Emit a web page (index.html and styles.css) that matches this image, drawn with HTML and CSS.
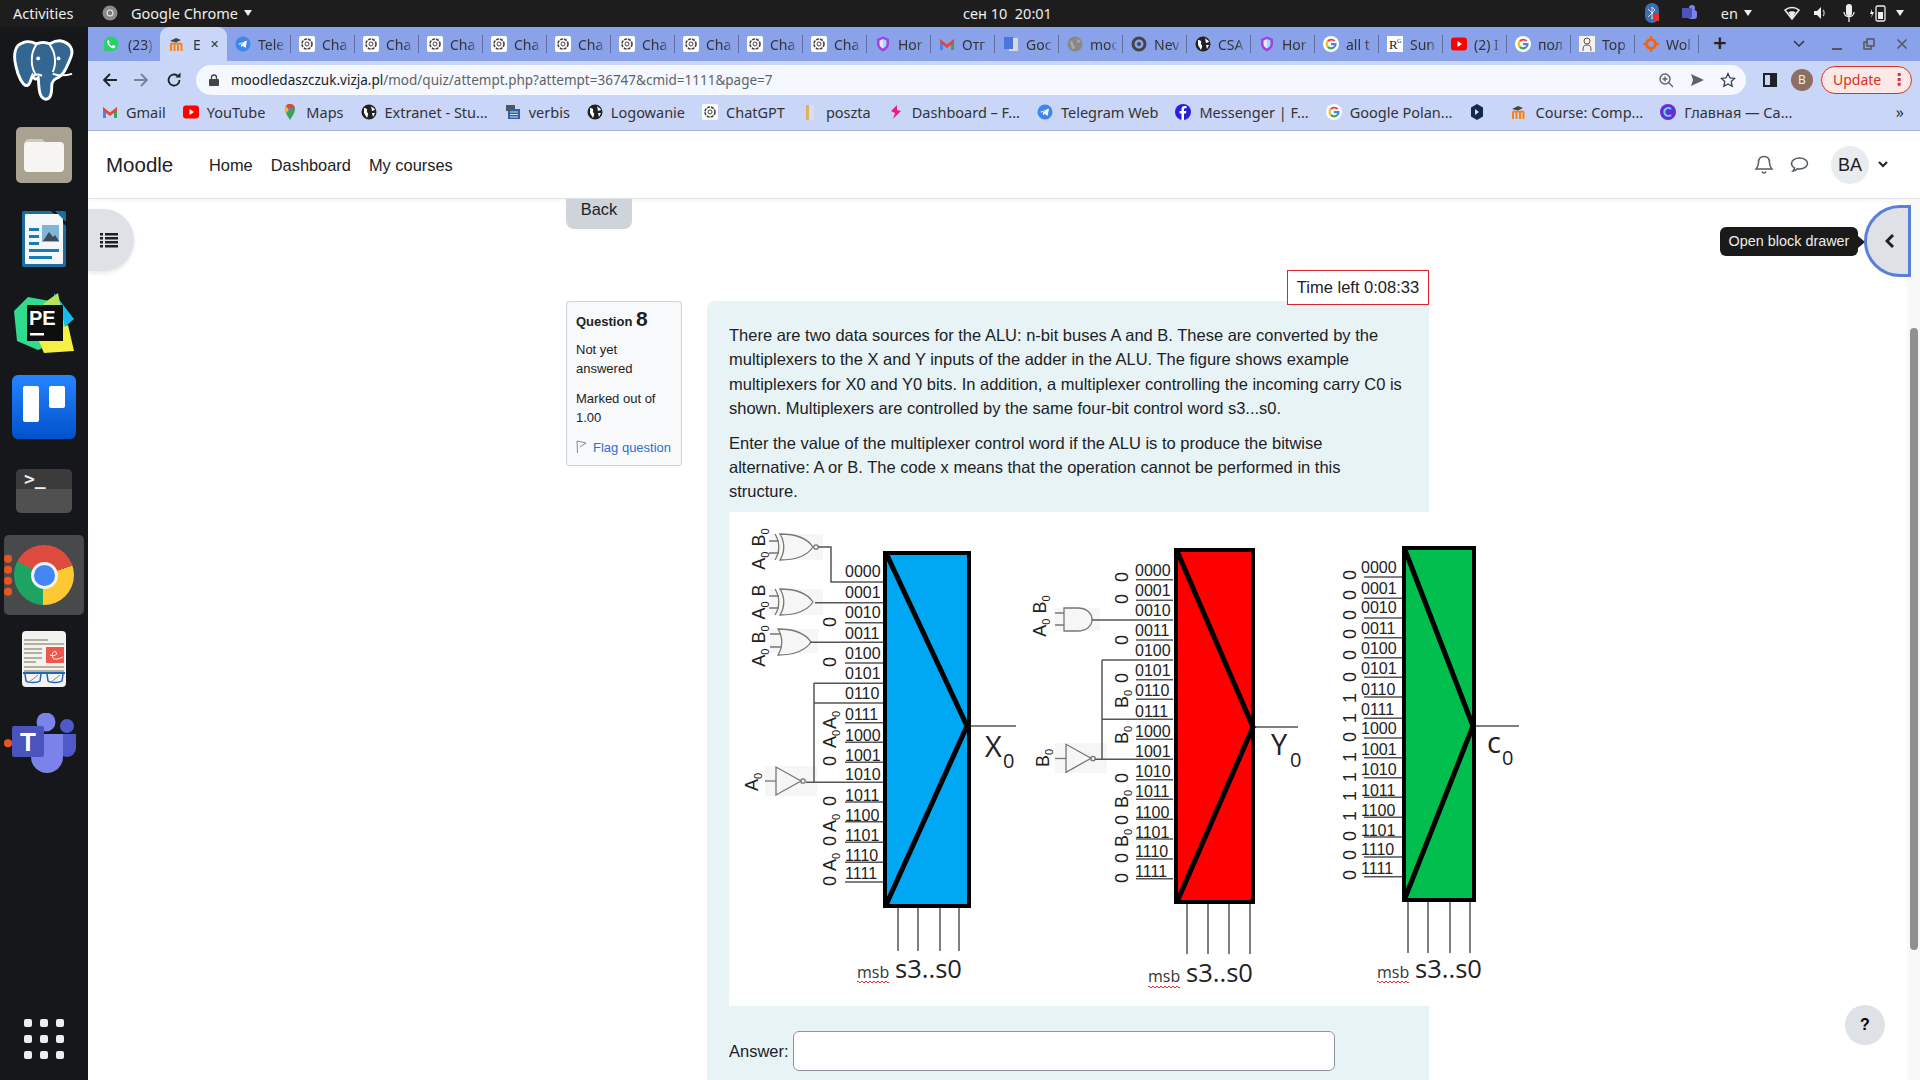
FILE: index.html
```html
<!DOCTYPE html>
<html lang="en">
<head>
    <meta charset="UTF-8">
    <title>Moodle quiz attempt</title>
    <link rel="stylesheet" href="styles.css">
</head>
<body>
    <svg class="sprite" width="0" height="0">
        <symbol id="i-wa" viewBox="0 0 16 16"><path d="M8 .5a7.4 7.4 0 0 0-6.4 11.1L.6 15.5l4-1A7.4 7.4 0 1 0 8 .5z" fill="#25d366"/><path d="M5.2 3.9c-.6.3-1.3 1.2-1 2.6.5 2.4 3.200 5.300 5.700 5.700 1.300.2 2.200-.5 2.400-1.200.1-.5.100-.9 0-1l-2-1c-.2 0-.4 0-.5.2l-.7.800c-.1.200-.3.200-.5.100-1.100-.5-2-1.300-2.600-2.500-.1-.2 0-.3.100-.4l.5-.7c.1-.1.100-.3 0-.5l-.8-1.900c-.2-.3-.4-.3-.6-.2z" fill="#fff"/></symbol>
        <symbol id="i-moodle" viewBox="0 0 16 16"><path d="M2 15V8.500c0-1.500 3.500-1.500 3.500 0V15M5.500 15V8.500c0-1.500 3.500-1.500 3.500 0V15M9 15V8.500c0-1.500 3.500-1.500 3.500 0V15" fill="none" stroke="#f98012" stroke-width="2"/><path d="M1 5l6-3 5 2-5 2.500z" fill="#444"/></symbol>
        <symbol id="i-tg" viewBox="0 0 16 16"><circle cx="8" cy="8" r="7.500" fill="#3f86ea"/><path d="M3 8l9-3.600-1.400 7.600-3-2.200-1.500 1.400-.3-2.400 4.200-3.400-5.400 3z" fill="#fff"/></symbol>
        <symbol id="i-gpt" viewBox="0 0 16 16"><rect width="16" height="16" rx="2" fill="#fff"/><circle cx="8" cy="8" r="5" fill="none" stroke="#444" stroke-width="1.600" stroke-dasharray="3 1"/><circle cx="8" cy="8" r="2" fill="none" stroke="#444"/></symbol>
        <symbol id="i-shield" viewBox="0 0 16 16"><path d="M8 .5l6 2.500v5c0 3.500-3 6-6 7.500-3-1.500-6-4-6-7.500V3z" fill="#a53fe0"/><path d="M8 3l3.500 1.500v3.500c0 2-1.500 3.500-3.500 4.500z" fill="#8fe8f0"/><path d="M8 3L4.500 4.500v3.500c0 2 1.500 3.500 3.500 4.500z" fill="#e8e2fb"/></symbol>
        <symbol id="i-gmail" viewBox="0 0 16 16"><path d="M1 3v11h3V7z" fill="#4285f4"/><path d="M15 3v11h-3V7z" fill="#34a853"/><path d="M1 3l7 5.500L15 3v3.500L8 12 1 6.500z" fill="#ea4335"/></symbol>
        <symbol id="i-translate" viewBox="0 0 16 16"><rect x="6" y="2" width="9" height="13" fill="#d8d8d8"/><path d="M1 1h9v12H1z" fill="#4a76dc"/></symbol>
        <symbol id="i-globegray" viewBox="0 0 16 16"><circle cx="8" cy="8" r="7.500" fill="#888"/><path d="M3 5c2 0 3 1 3 3s2 1 2 4l-3 1zM9 2c1 2 4 2 5 4l-3 1z" fill="#aaa"/></symbol>
        <symbol id="i-ring" viewBox="0 0 16 16"><circle cx="8" cy="8" r="6" fill="none" stroke="#444" stroke-width="3"/><circle cx="8" cy="8" r="2" fill="#444"/></symbol>
        <symbol id="i-globe" viewBox="0 0 16 16"><circle cx="8" cy="8" r="7.500" fill="#202124"/><path d="M3 4c2 0 4 1 3 3-1 1 2 2 1 4l-1 3-3-5zM10 2c1 2 3 1 4 4l-3 1zM11 9l3 0-2 4z" fill="#fff"/></symbol>
        <symbol id="i-google" viewBox="0 0 16 16"><circle cx="8" cy="8" r="8" fill="#fff"/><path d="M12.500 4.800A5.500 5.500 0 0 0 4 4.500l1.700 1.300a3.200 3.200 0 0 1 5-.4z" fill="#ea4335"/><path d="M4 4.500a5.500 5.500 0 0 0 0 7l1.700-1.300a3.200 3.200 0 0 1 0-4.400z" fill="#fbbc05"/><path d="M4 11.500a5.500 5.500 0 0 0 8.500-.2l-1.800-1.200a3.200 3.200 0 0 1-5 .1z" fill="#34a853"/><path d="M13.500 7H8v2.200h3.200a3 3 0 0 1-.5.900l1.800 1.200c1-1.200 1.200-2.800 1-4.300z" fill="#4285f4"/></symbol>
        <symbol id="i-yt" viewBox="0 0 16 16"><rect y="1.500" width="16" height="13" rx="3" fill="#f00"/><path d="M6.500 5v6L11 8z" fill="#fff"/></symbol>
        <symbol id="i-person" viewBox="0 0 16 16"><rect width="16" height="16" fill="#f4f1ea"/><circle cx="8" cy="5" r="3" fill="none" stroke="#555"/><path d="M4 15c0-5 1-6 4-6s4 1 4 6" fill="none" stroke="#555"/></symbol>
        <symbol id="i-gear" viewBox="0 0 16 16"><circle cx="8" cy="8" r="4.500" fill="none" stroke="#f4640c" stroke-width="3"/><path d="M7 0h2v3H7zM7 13h2v3H7zM0 7h3v2H0zM13 7h3v2h-3z" fill="#f4640c"/></symbol>
        <symbol id="i-maps" viewBox="0 0 16 16"><path d="M8 0C5 0 3 2.200 3 5c0 4 5 11 5 11s5-7 5-11c0-2.800-2-5-5-5z" fill="#34a853"/><path d="M4 2l4 3-4 4c-1-2-1.500-5 0-7z" fill="#fbbc05"/><path d="M8 0c2 0 4 1 4.500 3L8 7 4 2c1-1.400 2.500-2 4-2z" fill="#ea4335"/><circle cx="8" cy="5" r="1.800" fill="#4285f4"/></symbol>
        <symbol id="i-verbis" viewBox="0 0 16 16"><rect x="1" y="1" width="9" height="6" fill="#555"/><rect x="3" y="5" width="12" height="10" fill="#2f5fa8"/><path d="M5 8h8M5 10.500h8M5 13h8" stroke="#cfe0ff"/></symbol>
        <symbol id="i-poszta" viewBox="0 0 16 16"><rect x="4" y="1" width="3" height="15" fill="#e0b060"/><rect x="7" y="1" width="5" height="15" fill="#dcdfe8"/></symbol>
        <symbol id="i-dash" viewBox="0 0 16 16"><path d="M9 1L3 7l4 2-2 6 8-8-4-1z" fill="#ec1e79"/></symbol>
        <symbol id="i-fb" viewBox="0 0 16 16"><circle cx="8" cy="8" r="8" fill="#2a1fd6"/><path d="M9 16V9.500h2l.4-2.500H9V5.500c0-.7.300-1.200 1.300-1.200h1.200V2.100C11 2 10.300 2 9.700 2 7.800 2 6.500 3.100 6.500 5.200V7H4.500v2.500h2V16z" fill="#fff"/></symbol>
        <symbol id="i-hex" viewBox="0 0 16 16"><path d="M8 0l6 3.500v9L8 16l-6-3.500v-9z" fill="#14284c"/><path d="M6 5l4 3-4 3z" fill="#cfe0ff"/></symbol>
        <symbol id="i-c" viewBox="0 0 16 16"><circle cx="8" cy="8" r="8" fill="#6a2bd9"/><path d="M11 5a4 4 0 1 0 0 6" fill="none" stroke="#5fe0f0" stroke-width="2"/></symbol>
        <symbol id="i-chrome-gray" viewBox="0 0 16 16"><circle cx="8" cy="8" r="7.500" fill="#8a8a8a"/><circle cx="8" cy="8" r="3.500" fill="#ddd"/><circle cx="8" cy="8" r="2.200" fill="#777"/></symbol>
    </svg>

    <header class="topbar">
        <div class="topbar-left">
            <span class="activities">Activities</span>
            <svg class="topbar-icon" width="16" height="16"><use href="#i-chrome-gray"/></svg>
            <span>Google Chrome</span>
            <span class="caret"></span>
        </div>
        <span class="clock">сен 10&nbsp;&nbsp;20:01</span>
        <div class="tray">
            <svg width="14" height="20" viewBox="0 0 14 20"><rect width="14" height="20" rx="7" fill="#3d6fb0"/><path d="M3 6l7 7-3 3V4l3 3-7 7" fill="none" stroke="#dde" stroke-width="1"/><rect x="8" y="11" width="6" height="7" fill="#d33"/></svg>
            <svg class="tray-teams" width="18" height="18" viewBox="0 0 18 18"><circle cx="11" cy="4" r="3" fill="#7b83eb"/><rect x="7" y="6" width="9" height="9" rx="3" fill="#7b83eb"/><rect x="1" y="4" width="10" height="10" rx="1" fill="#4b53bc"/></svg>
            <span class="tray-lang">en</span>
            <span class="caret"></span>
            <svg class="tray-wifi" width="16" height="16" viewBox="0 0 16 16"><path d="M8 14L1 5c4-3.500 10-3.500 14 0z" fill="none" stroke="#eee" stroke-width="1.500"/><path d="M8 14L4.500 7c2-1 5-1 7 0z" fill="#eee"/></svg>
            <svg class="tray-sound" width="16" height="16" viewBox="0 0 16 16"><path d="M2 6h3l4-4v12l-4-4H2z" fill="#eee"/><path d="M11 5c1.500 1.500 1.500 4.500 0 6" fill="none" stroke="#bbb" stroke-width="1.300"/></svg>
            <svg class="tray-mic" width="12" height="20" viewBox="0 0 12 20"><rect x="3" y="1" width="6" height="12" rx="3" fill="#eee"/><path d="M1 9c0 6 10 6 10 0M6 14v5" fill="none" stroke="#eee" stroke-width="1.300"/></svg>
            <svg class="tray-battery" width="18" height="20" viewBox="0 0 18 20"><rect x="7" y="3" width="9" height="15" rx="1.500" fill="none" stroke="#eee" stroke-width="1.300"/><rect x="9" y="9" width="5" height="7" fill="#eee"/><path d="M3 6l-2 5h2l-1 4 3-6H3z" fill="#eee"/></svg>
            <span class="caret caret-last"></span>
        </div>
    </header>

    <div class="desktop">
        <nav class="dock">
            <div class="dock-item">
                <svg width="62" height="64" viewBox="0 0 64 66"><path d="M10 4C2 6 0 16 3 28c2 10 7 20 11 20 4 0 4-6 6-10 2 4 4 4 6 2 1 8 0 20 7 22 6 1 7-6 7-14 0-4 2-6 6-8 6-2 10-12 14-22 3-8-2-14-10-16-6-1-10 2-12 3-4-2-10-2-14 0-4-2-10-3-14-1z" fill="#336791" stroke="#fff" stroke-width="3"/><path d="M24 6c-6 8-6 22-1 30M38 6c6 8 7 20 3 28M41 36c6 2 13 2 20 0M21 38c3-2 7-1 9 0" fill="none" stroke="#fff" stroke-width="2"/><circle cx="26" cy="20" r="2" fill="#fff"/><circle cx="47" cy="20" r="2" fill="#fff"/></svg>
            </div>
            <div class="dock-item">
                <svg width="56" height="56" viewBox="0 0 56 56"><rect width="56" height="56" rx="5" fill="#a9a290"/><path d="M8 18c0-3 2-6 5-6h13l5 5H8z" fill="#cfcbbc"/><rect x="8" y="15" width="40" height="30" rx="4" fill="#f6f5f1"/></svg>
            </div>
            <div class="dock-item">
                <svg width="44" height="56" viewBox="0 0 44 56"><path d="M2 0h27l15 15v39a2 2 0 0 1-2 2H2a2 2 0 0 1-2-2V2a2 2 0 0 1 2-2z" fill="#1c6d9c"/><rect x="3" y="3" width="38" height="50" rx="1" fill="#f4f7fa"/><path d="M33 0h9a2 2 0 0 1 2 2v9z" fill="#1c6d9c"/><path d="M7 17h10v3H7zM7 24h10v3H7zM7 31h10v3H7zM7 38h30v3H7zM7 45h23v3H7z" fill="#1b7ab8"/><rect x="20" y="14" width="17" height="17" fill="#7fb5d8"/><path d="M21 30l6-9 4 5 2-2 4 6z" fill="#3f4c58"/></svg>
            </div>
            <div class="dock-item">
                <svg width="60" height="60" viewBox="0 0 60 60"><path d="M3 48L0 18 14 4l22 4 8 40-20 9z" fill="#2fdc8e"/><path d="M40 0l20 26-16 14z" fill="#14bdee"/><path d="M30 10L44 0l8 40-34-2z" fill="#b3e45a"/><path d="M24 46l30-14 6 26-30 2z" fill="#f6ef44"/><rect x="13" y="12" width="36" height="36" fill="#0e0e0e"/><text x="15" y="32" class="pe-text">PE</text><rect x="16" y="40" width="14" height="2.500" fill="#fff"/></svg>
            </div>
            <div class="dock-item">
                <div class="trello"><span class="trello-tall"></span><span class="trello-short"></span></div>
            </div>
            <div class="dock-item">
                <div class="terminal">&gt;_</div>
            </div>
            <div class="dock-item dock-active">
                <span class="run-dots"><i></i><i></i><i></i><i></i></span>
                <div class="chrome"><span></span></div>
            </div>
            <div class="dock-item">
                <svg width="44" height="56" viewBox="0 0 44 56"><rect width="44" height="56" rx="4" fill="#f2f2f0"/><path d="M2 9h24M2 13h40M2 18h18M2 22h18M2 27h18M2 31h12M2 36h40M2 40h40" stroke="#b5af9f" stroke-width="2"/><rect x="24" y="16" width="18" height="16" fill="#f0564a"/><path d="M28 24c4 2 8 0 6-3-2-2-5 2-3 6 1 2 6 1 10-1" fill="none" stroke="#fff"/><path d="M1 42h42" stroke="#1f66b8" stroke-width="2"/><path d="M3 43l1 7c2 2 11 2 14 0l1-7M25 43l1 7c2 2 11 2 14 0l1-7" fill="#f4f4f4" stroke="#1f66b8" stroke-width="1.500"/><path d="M6 52l10-8M28 52l10-8" stroke="#888"/></svg>
            </div>
            <div class="dock-item">
                <span class="run-dots"><i></i></span>
                <svg width="64" height="60" viewBox="0 0 64 60"><circle cx="34" cy="9" r="9.500" fill="#7b83eb"/><circle cx="55" cy="13" r="7" fill="#5059c9"/><path d="M46 21h18v14a9 9 0 0 1-18 0z" fill="#5059c9"/><path d="M19 21h32v23a16 16 0 0 1-32 0z" fill="#7b83eb"/><rect y="13" width="32" height="31" rx="2" fill="#4b53bc"/><text x="16" y="38" class="teams-text">T</text></svg>
            </div>
            <div class="dock-apps">
                <i></i><i></i><i></i><i></i><i></i><i></i><i></i><i></i><i></i>
            </div>
        </nav>

        <div class="window">
            <div class="tabstrip">
                <div class="tab tab-first"><svg><use href="#i-wa"/></svg><span>(23)</span></div>
                <div class="tab tab-active"><svg><use href="#i-moodle"/></svg><span>E</span><b>✕</b></div>
                <div class="tab"><svg><use href="#i-tg"/></svg><span>Tele</span></div>
                <div class="tab"><svg><use href="#i-gpt"/></svg><span>Cha</span></div>
                <div class="tab"><svg><use href="#i-gpt"/></svg><span>Cha</span></div>
                <div class="tab"><svg><use href="#i-gpt"/></svg><span>Cha</span></div>
                <div class="tab"><svg><use href="#i-gpt"/></svg><span>Cha</span></div>
                <div class="tab"><svg><use href="#i-gpt"/></svg><span>Cha</span></div>
                <div class="tab"><svg><use href="#i-gpt"/></svg><span>Cha</span></div>
                <div class="tab"><svg><use href="#i-gpt"/></svg><span>Cha</span></div>
                <div class="tab"><svg><use href="#i-gpt"/></svg><span>Cha</span></div>
                <div class="tab"><svg><use href="#i-gpt"/></svg><span>Cha</span></div>
                <div class="tab"><svg><use href="#i-shield"/></svg><span>Hor</span></div>
                <div class="tab"><svg><use href="#i-gmail"/></svg><span>Отг</span></div>
                <div class="tab"><svg><use href="#i-translate"/></svg><span>Goc</span></div>
                <div class="tab"><svg><use href="#i-globegray"/></svg><span>moo</span></div>
                <div class="tab"><svg><use href="#i-ring"/></svg><span>Nev</span></div>
                <div class="tab"><svg><use href="#i-globe"/></svg><span>CSA</span></div>
                <div class="tab"><svg><use href="#i-shield"/></svg><span>Hor</span></div>
                <div class="tab"><svg><use href="#i-google"/></svg><span>all t</span></div>
                <div class="tab"><svg viewBox="0 0 16 16"><rect width="16" height="16" fill="#fff"/><text x="2" y="13" class="sym-rg">R</text><text x="10" y="7" class="sym-rg-small">G</text></svg><span>Sun</span></div>
                <div class="tab"><svg><use href="#i-yt"/></svg><span>(2) I</span></div>
                <div class="tab"><svg><use href="#i-google"/></svg><span>пол</span></div>
                <div class="tab"><svg><use href="#i-person"/></svg><span>Top</span></div>
                <div class="tab"><svg><use href="#i-gear"/></svg><span>Wol</span></div>
                <span class="tab-new">+</span>
                <div class="win-controls">
                    <svg class="win-more" width="12" height="8" viewBox="0 0 12 8"><path d="M1 1l5 5 5-5" fill="none" stroke="#333" stroke-width="1.500"/></svg>
                    <span class="win-min"></span>
                    <svg width="12" height="12" viewBox="0 0 12 12"><rect x="1" y="4" width="7" height="7" fill="none" stroke="#555" stroke-width="1.500"/><rect x="4" y="1" width="7" height="7" fill="#8aa2ea" stroke="#555" stroke-width="1.500"/></svg>
                    <svg width="12" height="12" viewBox="0 0 12 12"><path d="M1.500 1.500l9 9M10.500 1.500l-9 9" stroke="#555" stroke-width="1.500"/></svg>
                </div>
            </div>

            <div class="toolbar">
                <svg class="tool-back" width="16" height="16" viewBox="0 0 16 16"><path d="M15 8H2M8 2L2 8l6 6" fill="none" stroke="#202124" stroke-width="1.800"/></svg>
                <svg class="tool-forward" width="16" height="16" viewBox="0 0 16 16"><path d="M1 8h13M8 2l6 6-6 6" fill="none" stroke="#7b8190" stroke-width="1.800"/></svg>
                <svg class="tool-reload" width="16" height="16" viewBox="0 0 16 16"><path d="M13.500 8A5.500 5.500 0 1 1 11.500 3.800" fill="none" stroke="#202124" stroke-width="1.800"/><path d="M9.500 5.500H14.500V.5z" fill="#202124"/></svg>
                <div class="urlbar">
                    <svg class="url-lock" width="10" height="12" viewBox="0 0 10 12"><path d="M2.500 5V3.500a2.500 2.500 0 0 1 5 0V5" fill="none" stroke="#444" stroke-width="1.300"/><rect y="5" width="10" height="7" rx="1" fill="#444"/></svg>
                    <span class="url-host">moodledaszczuk.vizja.pl</span><span class="url-path">/mod/quiz/attempt.php?attempt=36747&amp;cmid=1111&amp;page=7</span>
                    <div class="url-actions">
                        <svg width="16" height="16" viewBox="0 0 16 16"><circle cx="7" cy="7" r="5" fill="none" stroke="#5f6368" stroke-width="1.400"/><path d="M10.500 10.500L15 15M4.500 7h5M7 4.500v5" stroke="#5f6368" stroke-width="1.400"/></svg>
                        <svg width="16" height="16" viewBox="0 0 16 16"><path d="M2 2l13 6-13 6 2-6z" fill="#5f6368"/></svg>
                        <svg width="16" height="16" viewBox="0 0 16 16"><path d="M8 1.500l2 4.400 4.700.5-3.500 3.200 1 4.700L8 11.900l-4.200 2.400 1-4.700L1.300 6.400 6 5.900z" fill="none" stroke="#3c4043" stroke-width="1.300"/></svg>
                    </div>
                </div>
                <svg class="tool-panel" width="14" height="14" viewBox="0 0 14 14"><rect x="1" y="1" width="12" height="12" fill="none" stroke="#202124" stroke-width="2"/><rect x="7" y="1" width="6" height="12" fill="#202124"/></svg>
                <span class="profile">B</span>
                <span class="update">Update<i>⋮</i></span>
            </div>

            <div class="bookmarks">
                <span class="bm"><svg><use href="#i-gmail"/></svg>Gmail</span>
                <span class="bm"><svg><use href="#i-yt"/></svg>YouTube</span>
                <span class="bm"><svg><use href="#i-maps"/></svg>Maps</span>
                <span class="bm"><svg><use href="#i-globe"/></svg>Extranet - Stu...</span>
                <span class="bm"><svg><use href="#i-verbis"/></svg>verbis</span>
                <span class="bm"><svg><use href="#i-globe"/></svg>Logowanie</span>
                <span class="bm"><svg><use href="#i-gpt"/></svg>ChatGPT</span>
                <span class="bm"><svg><use href="#i-poszta"/></svg>poszta</span>
                <span class="bm"><svg><use href="#i-dash"/></svg>Dashboard – F...</span>
                <span class="bm"><svg><use href="#i-tg"/></svg>Telegram Web</span>
                <span class="bm"><svg><use href="#i-fb"/></svg>Messenger | F...</span>
                <span class="bm"><svg><use href="#i-google"/></svg>Google Polan...</span>
                <span class="bm bm-icon"><svg><use href="#i-hex"/></svg></span>
                <span class="bm"><svg><use href="#i-moodle"/></svg>Course: Comp...</span>
                <span class="bm"><svg><use href="#i-c"/></svg>Главная — Са...</span>
                <span class="bm-more">»</span>
            </div>

            <div class="page">
                <div class="navbar">
                    <span class="brand">Moodle</span>
                    <a class="nav-link">Home</a>
                    <a class="nav-link">Dashboard</a>
                    <a class="nav-link">My courses</a>
                    <div class="nav-right">
                        <svg width="18" height="20" viewBox="0 0 18 20"><path d="M9 1.500c-4 0-5.500 3-5.500 6 0 3-1 5-2.500 6.500h16c-1.500-1.500-2.500-3.500-2.500-6.500 0-3-1.500-6-5.500-6zM7 16.500c.5 2 3.500 2 4 0" fill="none" stroke="#555c63" stroke-width="1.500"/></svg>
                        <svg class="nav-chat" width="19" height="18" viewBox="0 0 19 18"><path d="M9.500 2c-4.500 0-8 2.500-8 5.500 0 1.800 1.200 3.300 3 4.300-.2 1.500-1 2.700-1.500 3.200 1.700-.2 3.300-1 4.300-2.200.7.100 1.400.2 2.200.2 4.500 0 8-2.500 8-5.500S14 2 9.500 2z" fill="none" stroke="#555c63" stroke-width="1.500"/></svg>
                        <span class="avatar">BA</span>
                        <svg width="10" height="7" viewBox="0 0 10 7"><path d="M1 1l4 4 4-4" fill="none" stroke="#1d2125" stroke-width="2"/></svg>
                    </div>
                </div>

                <main class="region">
                    <div class="back-row"><a class="back-btn">Back</a></div>
                    <div class="time-row"><span class="time-left">Time left 0:08:33</span></div>
                    <div class="question">
                        <aside class="qinfo">
                            <h3>Question <span>8</span></h3>
                            <p>Not yet answered</p>
                            <p>Marked out of 1.00</p>
                            <a class="flag"><svg width="11" height="14" viewBox="0 0 11 14"><path d="M1.500 13L1 1l9 2-6 4" fill="none" stroke="#888" stroke-width="1"/></svg>Flag question</a>
                        </aside>
                        <section class="qtext">
                            <p>There are two data sources for the ALU: n-bit buses A and B. These are converted by the multiplexers to the X and Y inputs of the adder in the ALU. The figure shows example multiplexers for X0 and Y0 bits. In addition, a multiplexer controlling the incoming carry C0 is shown. Multiplexers are controlled by the same four-bit control word s3...s0.</p>
                            <p>Enter the value of the multiplexer control word if the ALU is to produce the bitwise alternative: A or B. The code x means that the operation cannot be performed in this structure.</p>
                            <svg class="figure" width="800" height="494" viewBox="729 512 800 494">
                                <defs>
                                    <g id="or-body"><path d="M0 0c15 0 27 4 33 13-6 9-18 13-33 13 5-8 5-18 0-26z" fill="none" stroke="#777" stroke-width="1.300"/></g>
                                </defs>

                                <!-- X0 -->
                                <rect x="770" y="534" width="53" height="26" class="gate-bg"/>
                                <rect x="770" y="589" width="53" height="26" class="gate-bg"/>
                                <rect x="770" y="629" width="48" height="24" class="gate-bg"/>
                                <rect x="765" y="766" width="52" height="30" class="gate-bg"/>
                                <use href="#or-body" x="780" y="534"/>
                                <path d="M775 534c5 8 5 18 0 26M769 541h10M769 553h10" class="gate"/>
                                <circle cx="816" cy="547" r="2.200" class="gate"/>
                                <use href="#or-body" x="780" y="589"/>
                                <path d="M775 589c5 8 5 18 0 26M769 596h10M769 608h10" class="gate"/>
                                <use href="#or-body" x="778" y="629"/>
                                <path d="M770 634h11M770 647h11" class="gate"/>
                                <path d="M776 767v28l25-14z" class="gate"/>
                                <circle cx="803" cy="781" r="2.200" class="gate"/>
                                <path d="M765 781h11" class="gate"/>
                                <path d="M818 547h13v35h52M815 602.700h68M810 642.300h73M845 622.700h38M845 663h38M814 683.300h69M814 703h69M845 722.700h38M845 742.300h38M845 762.300h38M806 782.300h77M845 802h38M845 821.700h38M845 842.300h38M845 862.300h38M845 882h38M814 683v99M971 726h45M898 908v43M918 908v43M940 908v43M959 908v43" class="wire"/>
                                <text x="845" y="576.700" class="code">0000</text>
                                <text x="845" y="598.300" class="code">0001</text>
                                <text x="845" y="618.300" class="code">0010</text>
                                <text x="845" y="639.300" class="code">0011</text>
                                <text x="845" y="659" class="code">0100</text>
                                <text x="845" y="679" class="code">0101</text>
                                <text x="845" y="699.300" class="code">0110</text>
                                <text x="845" y="720" class="code">0111</text>
                                <text x="845" y="740.700" class="code">1000</text>
                                <text x="845" y="760.700" class="code">1001</text>
                                <text x="845" y="780" class="code">1010</text>
                                <text x="845" y="801" class="code">1011</text>
                                <text x="845" y="821" class="code">1100</text>
                                <text x="845" y="840.700" class="code">1101</text>
                                <text x="845" y="860.700" class="code">1110</text>
                                <text x="845" y="879" class="code">1111</text>
                                <text transform="translate(765 549) rotate(-90)" class="side">A<tspan class="sub">0</tspan> B<tspan class="sub">0</tspan></text>
                                <text transform="translate(765 602) rotate(-90)" class="side">A<tspan class="sub">0</tspan> B</text>
                                <text transform="translate(765 646) rotate(-90)" class="side">A<tspan class="sub">0</tspan> B<tspan class="sub">0</tspan></text>
                                <text transform="translate(758 782) rotate(-90)" class="side">A<tspan class="sub">0</tspan></text>
                                <text transform="translate(836 622) rotate(-90)" class="side">0</text>
                                <text transform="translate(836 662) rotate(-90)" class="side">0</text>
                                <text transform="translate(836 720) rotate(-90)" class="side">A<tspan class="sub">0</tspan></text>
                                <text transform="translate(836 739) rotate(-90)" class="side">A<tspan class="sub">0</tspan></text>
                                <text transform="translate(836 761) rotate(-90)" class="side">0</text>
                                <text transform="translate(836 801) rotate(-90)" class="side">0</text>
                                <text transform="translate(836 823) rotate(-90)" class="side">A<tspan class="sub">0</tspan></text>
                                <text transform="translate(836 841) rotate(-90)" class="side">0</text>
                                <text transform="translate(836 862) rotate(-90)" class="side">A<tspan class="sub">0</tspan></text>
                                <text transform="translate(836 881) rotate(-90)" class="side">0</text>
                                <rect x="885" y="553" width="84" height="353" fill="#00a8f3" class="mux"/>
                                <path d="M886 553l81 173-81 179" class="mux-lines"/>
                                <text x="985" y="757" class="out">X</text>
                                <text x="1003" y="768" class="out-sub">0</text>
                                <text x="857" y="978" class="msb">msb</text>
                                <text x="895" y="978" class="ctrl">s3..s0</text>
                                <path d="M857 982q1 -2 2 0t2 0t2 0t2 0t2 0t2 0t2 0t2 0t2 0t2 0t2 0t2 0t2 0t2 0t2 0t2 0" class="squiggle"/>

                                <!-- Y0 -->
                                <rect x="1055" y="608" width="45" height="23" class="gate-bg"/>
                                <rect x="1055" y="743" width="52" height="30" class="gate-bg"/>
                                <path d="M1064 608h14c8 0 14 5 14 11.500s-6 11.500-14 11.500h-14zM1055 613h9M1055 625h9" class="gate"/>
                                <path d="M1066 744.300v28l25-14z" class="gate"/>
                                <circle cx="1093" cy="758.500" r="2.200" class="gate"/>
                                <path d="M1055 758.500h11" class="gate"/>
                                <path d="M1136 579.700h37M1136 600.300h37M1092 620h81M1136 640h37M1102 660h71M1136 679.700h37M1136 699.300h37M1102 719.300h71M1136 739.300h37M1095 759.300h78M1136 779.700h37M1136 799.300h37M1136 819.300h37M1136 839h37M1136 859h37M1136 878.700h37M1102 660v99M1255 727h43M1187 904v50M1208 904v50M1229 904v50M1250 904v50" class="wire"/>
                                <text x="1135" y="575.700" class="code">0000</text>
                                <text x="1135" y="595.700" class="code">0001</text>
                                <text x="1135" y="615.700" class="code">0010</text>
                                <text x="1135" y="635.700" class="code">0011</text>
                                <text x="1135" y="656" class="code">0100</text>
                                <text x="1135" y="676" class="code">0101</text>
                                <text x="1135" y="695.700" class="code">0110</text>
                                <text x="1135" y="716.700" class="code">0111</text>
                                <text x="1135" y="736.700" class="code">1000</text>
                                <text x="1135" y="756.700" class="code">1001</text>
                                <text x="1135" y="777.300" class="code">1010</text>
                                <text x="1135" y="797.300" class="code">1011</text>
                                <text x="1135" y="818" class="code">1100</text>
                                <text x="1135" y="838" class="code">1101</text>
                                <text x="1135" y="857.300" class="code">1110</text>
                                <text x="1135" y="877.300" class="code">1111</text>
                                <text transform="translate(1046 616) rotate(-90)" class="side">A<tspan class="sub">0</tspan> B<tspan class="sub">0</tspan></text>
                                <text transform="translate(1049 758) rotate(-90)" class="side">B<tspan class="sub">0</tspan></text>
                                <text transform="translate(1128 577) rotate(-90)" class="side">0</text>
                                <text transform="translate(1128 599) rotate(-90)" class="side">0</text>
                                <text transform="translate(1128 640) rotate(-90)" class="side">0</text>
                                <text transform="translate(1128 678) rotate(-90)" class="side">0</text>
                                <text transform="translate(1128 699) rotate(-90)" class="side">B<tspan class="sub">0</tspan></text>
                                <text transform="translate(1128 735) rotate(-90)" class="side">B<tspan class="sub">0</tspan></text>
                                <text transform="translate(1128 778) rotate(-90)" class="side">0</text>
                                <text transform="translate(1128 799) rotate(-90)" class="side">B<tspan class="sub">0</tspan></text>
                                <text transform="translate(1128 820) rotate(-90)" class="side">0</text>
                                <text transform="translate(1128 838) rotate(-90)" class="side">B<tspan class="sub">0</tspan></text>
                                <text transform="translate(1128 858) rotate(-90)" class="side">0</text>
                                <text transform="translate(1128 878) rotate(-90)" class="side">0</text>
                                <rect x="1176" y="550" width="77" height="352" fill="#ff0000" class="mux"/>
                                <path d="M1177 551l76 176-76 175" class="mux-lines"/>
                                <text x="1271" y="755" class="out">Y</text>
                                <text x="1290" y="767" class="out-sub">0</text>
                                <text x="1148" y="982" class="msb">msb</text>
                                <text x="1186" y="982" class="ctrl">s3..s0</text>
                                <path d="M1148 987q1 -2 2 0t2 0t2 0t2 0t2 0t2 0t2 0t2 0t2 0t2 0t2 0t2 0t2 0t2 0t2 0t2 0" class="squiggle"/>

                                <!-- C0 -->
                                <path d="M1364 577h38M1364 598.300h38M1364 618h38M1364 637.700h38M1364 657.700h38M1364 677.300h38M1364 697h38M1364 718.300h38M1364 738h38M1364 757.700h38M1364 777.700h38M1364 797.300h38M1364 817.300h38M1364 837h38M1364 857h38M1364 876.700h38M1476 726h43M1408 902v51M1428 902v51M1450 902v51M1470 902v51" class="wire"/>
                                <text x="1361" y="572.700" class="code">0000</text>
                                <text x="1361" y="594" class="code">0001</text>
                                <text x="1361" y="613.300" class="code">0010</text>
                                <text x="1361" y="634" class="code">0011</text>
                                <text x="1361" y="654" class="code">0100</text>
                                <text x="1361" y="674" class="code">0101</text>
                                <text x="1361" y="695" class="code">0110</text>
                                <text x="1361" y="715" class="code">0111</text>
                                <text x="1361" y="734" class="code">1000</text>
                                <text x="1361" y="755" class="code">1001</text>
                                <text x="1361" y="775" class="code">1010</text>
                                <text x="1361" y="795.700" class="code">1011</text>
                                <text x="1361" y="815.700" class="code">1100</text>
                                <text x="1361" y="835.700" class="code">1101</text>
                                <text x="1361" y="855" class="code">1110</text>
                                <text x="1361" y="874.300" class="code">1111</text>
                                <text transform="translate(1356 575) rotate(-90)" class="side">0</text>
                                <text transform="translate(1356 595) rotate(-90)" class="side">0</text>
                                <text transform="translate(1356 615) rotate(-90)" class="side">0</text>
                                <text transform="translate(1356 634) rotate(-90)" class="side">0</text>
                                <text transform="translate(1356 655) rotate(-90)" class="side">0</text>
                                <text transform="translate(1356 677) rotate(-90)" class="side">0</text>
                                <text transform="translate(1356 698) rotate(-90)" class="side">1</text>
                                <text transform="translate(1356 718) rotate(-90)" class="side">1</text>
                                <text transform="translate(1356 737) rotate(-90)" class="side">0</text>
                                <text transform="translate(1356 757) rotate(-90)" class="side">1</text>
                                <text transform="translate(1356 777) rotate(-90)" class="side">1</text>
                                <text transform="translate(1356 796) rotate(-90)" class="side">1</text>
                                <text transform="translate(1356 816) rotate(-90)" class="side">1</text>
                                <text transform="translate(1356 836) rotate(-90)" class="side">0</text>
                                <text transform="translate(1356 855) rotate(-90)" class="side">0</text>
                                <text transform="translate(1356 875) rotate(-90)" class="side">0</text>
                                <rect x="1404" y="548" width="70" height="352" fill="#00bf4f" class="mux"/>
                                <path d="M1405 550l68 176-68 172" class="mux-lines"/>
                                <text x="1487" y="753" class="out">c</text>
                                <text x="1502" y="765" class="out-sub">0</text>
                                <text x="1377" y="978" class="msb">msb</text>
                                <text x="1415" y="978" class="ctrl">s3..s0</text>
                                <path d="M1377 982q1 -2 2 0t2 0t2 0t2 0t2 0t2 0t2 0t2 0t2 0t2 0t2 0t2 0t2 0t2 0t2 0t2 0" class="squiggle"/>
                            </svg>
                            <div class="answer">
                                <label for="answer">Answer:</label>
                                <input type="text" id="answer">
                            </div>
                        </section>
                    </div>
                </main>

                <button class="drawer-left">
                    <svg width="18" height="16" viewBox="0 0 18 16"><path d="M0 1h3v2.500H0zM5 1h13v2.500H5zM0 5h3v2.500H0zM5 5h13v2.500H5zM0 9h3v2.500H0zM5 9h13v2.500H5zM0 13h3v2.500H0zM5 13h13v2.500H5z" fill="#1d2125"/></svg>
                </button>
                <div class="tooltip">Open block drawer</div>
                <button class="drawer-right">
                    <svg width="10" height="16" viewBox="0 0 10 16"><path d="M8 2L2 8l6 6" fill="none" stroke="#1d2125" stroke-width="3"/></svg>
                </button>
                <div class="scrollbar"><span></span></div>
                <button class="help">?</button>
            </div>
        </div>
    </div>
</body>
</html>
```

FILE: styles.css
```css
* {
    box-sizing: border-box;
}
html, body {
    margin: 0;
    width: 1920px;
    height: 1080px;
    overflow: hidden;
}
body {
    font-family: "Liberation Sans", Arial, sans-serif;
    font-size: 16px;
    color: #1d2125;
    background: #fff;
}
.sprite {
    position: absolute;
}
.sym-rg {
    font: 13px "Liberation Serif", serif;
    fill: #222;
}
.sym-rg-small {
    font: 6px "Liberation Serif", serif;
    fill: #222;
}

/* gnome top bar */
.topbar {
    height: 27px;
    padding-bottom: 1px;
    display: flex;
    align-items: center;
    background: #1d1d1d;
    color: #eee;
    font: 14.500px "Noto Sans", sans-serif;
}
.topbar-left {
    width: 963px;
    padding-left: 13px;
    display: flex;
    align-items: center;
}
.activities {
    width: 89px;
}
.topbar-icon {
    margin-right: 13px;
}
.caret {
    width: 0;
    height: 0;
    margin-left: 6px;
    border: 4.5px solid transparent;
    border-top: 6px solid #eee;
    border-bottom: 0;
}
.tray {
    margin-left: auto;
    padding-right: 16px;
    display: flex;
    align-items: center;
}
.tray-teams {
    margin-left: 22px;
}
.tray-lang {
    margin-left: 22px;
}
.tray-wifi {
    margin-left: 32px;
}
.tray-sound {
    margin-left: 12px;
}
.tray-mic {
    margin-left: 15px;
}
.tray-battery {
    margin-left: 14px;
}
.caret-last {
    margin-left: 9px;
}

.desktop {
    display: flex;
    height: 1053px;
}

/* dock */
.dock {
    width: 88px;
    flex: none;
    padding-top: 2px;
    display: flex;
    flex-direction: column;
    align-items: center;
    background: #16171a;
    position: relative;
}
.dock-item {
    width: 80px;
    height: 84px;
    display: flex;
    align-items: center;
    justify-content: center;
    position: relative;
}
.dock-active {
    height: 80px;
    margin: 2px 0;
    border-radius: 5px;
    background: #48494b;
}
.run-dots {
    position: absolute;
    left: 0;
    top: 50%;
    transform: translateY(-50%);
    display: flex;
    flex-direction: column;
    gap: 3.500px;
}
.run-dots i {
    width: 7.500px;
    height: 7.500px;
    border-radius: 50%;
    background: #e95420;
}
.trello {
    width: 64px;
    height: 64px;
    padding: 11px;
    display: flex;
    justify-content: space-between;
    align-items: flex-start;
    border-radius: 6px;
    background: linear-gradient(#2684ff, #0052cc);
}
.trello span {
    width: 16px;
    border-radius: 2px;
    background: #fff;
}
.trello-tall {
    height: 36px;
}
.trello-short {
    height: 22px;
}
.terminal {
    width: 56px;
    height: 44px;
    padding: 0 8px;
    border-radius: 5px;
    background: linear-gradient(#3b3b3b 45%, #505050 45%);
    color: #eee;
    font: bold 18px/20px "DejaVu Sans Mono", monospace;
}
.chrome {
    width: 60px;
    height: 60px;
    display: flex;
    align-items: center;
    justify-content: center;
    border-radius: 50%;
    background: conic-gradient(#df4a3e 0 72deg, #fcc934 72deg 182deg, #1da462 182deg 298deg, #df4a3e 298deg);
}
.chrome span {
    width: 27px;
    height: 27px;
    border-radius: 50%;
    background: #4285f4;
    border: 3px solid #f1f3f4;
}
.dock-apps {
    position: absolute;
    left: 24px;
    bottom: 21px;
    display: grid;
    grid-template-columns: repeat(3, 8px);
    gap: 8px;
}
.dock-apps i {
    height: 8px;
    border-radius: 2px;
    background: #eee;
}
.pe-text {
    font: bold 20px "Liberation Sans", sans-serif;
    fill: #fff;
}
.teams-text {
    font: bold 26px "Liberation Sans", sans-serif;
    fill: #fff;
    text-anchor: middle;
}

/* chrome window */
.window {
    flex: 1;
    min-width: 0;
    display: flex;
    flex-direction: column;
}
.tabstrip {
    height: 34px;
    display: flex;
    background: #8aa2ea;
    font: 14px "Noto Sans", sans-serif;
    color: #333;
}
.tab {
    width: 64px;
    flex: none;
    padding-left: 8px;
    display: flex;
    align-items: center;
    gap: 7px;
    position: relative;
}
.tab::after {
    content: "";
    position: absolute;
    right: 0;
    top: 8px;
    height: 18px;
    width: 1px;
    background: #5d6e9f;
}
.tab svg {
    width: 16px;
    height: 16px;
    flex: none;
}
.tab span {
    flex: 1;
    min-width: 0;
    white-space: nowrap;
    -webkit-mask-image: linear-gradient(90deg, #000 70%, transparent 105%);
    mask-image: linear-gradient(90deg, #000 70%, transparent 105%);
}
.tab span:last-child {
    margin-right: 6px;
}
.tab-first {
    width: 72px;
    padding-left: 15px;
    gap: 9px;
}
.tab-first::after,
.tab-active::after {
    display: none;
}
.tab-active {
    width: 67px;
    padding-left: 9px;
    border-radius: 9px 9px 0 0;
    background: #c9d6f8;
    gap: 8px;
}
.tab-active span {
    flex: none;
    width: 9px;
}
.tab-active b {
    font: 11px "DejaVu Sans", sans-serif;
}
.tab-new {
    width: 34px;
    padding-left: 14px;
    font: 600 24px/32px "Noto Sans", sans-serif;
    color: #222;
}
.win-controls {
    flex: 1;
    padding-left: 60px;
    display: flex;
    align-items: center;
    gap: 21px;
}
.win-more {
    margin-right: 6px;
}
.win-min {
    width: 10px;
    height: 2px;
    margin-top: 10px;
    background: #555;
}
.toolbar {
    height: 37px;
    padding-left: 14px;
    display: flex;
    align-items: center;
    background: #c9d6f8;
}
.tool-forward {
    margin-left: 15px;
}
.tool-reload {
    margin-left: 17px;
}
.urlbar {
    width: 1550px;
    height: 30px;
    margin-left: 14px;
    padding-left: 13px;
    display: flex;
    align-items: center;
    border-radius: 15px;
    background: #f5f8fe;
    font: 13.500px "Noto Sans", sans-serif;
}
.url-lock {
    margin-right: 12px;
}
.url-host {
    color: #202124;
}
.url-path {
    color: #5f6368;
}
.url-actions {
    margin-left: auto;
    padding-right: 10px;
    display: flex;
    gap: 15px;
}
.tool-panel {
    margin-left: 17px;
}
.profile {
    width: 22px;
    height: 22px;
    margin-left: 14px;
    border-radius: 50%;
    background: #8d6e63;
    color: #eee;
    font: 12px/22px "Noto Sans", sans-serif;
    text-align: center;
}
.update {
    width: 91px;
    height: 28px;
    margin-left: 8px;
    padding-left: 11px;
    display: flex;
    align-items: center;
    justify-content: space-between;
    border: 1px solid #d93025;
    border-radius: 14px;
    background: #fce8e6;
    color: #d93025;
    font: 14px "Noto Sans", sans-serif;
}
.update i {
    width: 20px;
    font: bold 16px "DejaVu Sans", sans-serif;
}
.bookmarks {
    height: 33px;
    padding: 0 0 4px 14px;
    display: flex;
    align-items: center;
    gap: 17px;
    background: #c9d6f8;
    border-bottom: 1px solid #a7b1cc;
    font: 14.500px "Noto Sans", sans-serif;
    color: #333;
    white-space: nowrap;
}
.bm {
    display: flex;
    align-items: center;
    gap: 8px;
}
.bm svg {
    width: 16px;
    height: 16px;
}
.bm-icon {
    margin-right: 9px;
}
.bm-more {
    margin-left: auto;
    padding-right: 16px;
    font-size: 16px;
}

/* moodle page */
.page {
    flex: 1;
    min-height: 0;
    position: relative;
    overflow: hidden;
}
.navbar {
    height: 68px;
    padding-left: 18px;
    display: flex;
    align-items: center;
    border-bottom: 1px solid #dee2e6;
    box-shadow: 0 2px 4px rgba(0, 0, 0, 0.04);
}
.brand {
    width: 103px;
    font-size: 20.500px;
}
.nav-link {
    margin: 1px 18px 0 0;
    font-size: 16.400px;
}
.nav-right {
    margin-left: auto;
    padding-right: 32px;
    display: flex;
    align-items: center;
}
.nav-chat {
    margin-left: 17px;
}
.avatar {
    width: 38px;
    height: 38px;
    margin: 0 9px 0 22px;
    border-radius: 50%;
    background: #e9ecef;
    font-size: 18px;
    line-height: 38px;
    text-align: center;
}
.region {
    padding-left: 478px;
    width: 1341px;
}
.back-row {
    height: 30px;
}
.back-btn {
    display: block;
    width: 66px;
    height: 30px;
    border-radius: 0 0 8px 8px;
    background: #ced4da;
    text-align: center;
    font-size: 16.400px;
    line-height: 21px;
}
.time-row {
    margin-top: 41px;
    margin-bottom: -4px;
    display: flex;
    justify-content: flex-end;
    position: relative;
}
.time-left {
    height: 35px;
    width: 142px;
    border: 1px solid #d9232e;
    background: #fff;
    font-size: 16.500px;
    line-height: 33px;
    text-align: center;
}
.question {
    display: flex;
    align-items: flex-start;
    gap: 25px;
}
.qinfo {
    width: 116px;
    flex: none;
    height: 165px;
    padding: 4.500px 9px;
    border: 1px solid #ced4da;
    border-radius: 3px;
    background: #f8f9fa;
    font-size: 13px;
    line-height: 19.500px;
}
.qinfo h3 {
    margin: 0 0 6px;
    font-size: 13px;
    line-height: 24px;
}
.qinfo h3 span {
    font-size: 21px;
}
.qinfo p {
    margin: 0 0 10px;
}
.flag {
    display: flex;
    align-items: center;
    gap: 6px;
    color: #2f6fd0;
}
.qtext {
    width: 722px;
    flex: none;
    padding: 22px 0 0 22px;
    height: 900px;
    border-radius: 8px 0 0 0;
    background: #e7f3f5;
    font-size: 16.500px;
    line-height: 24.400px;
}
.qtext p {
    margin: 0 24px 10px 0;
}
.qtext p:nth-of-type(2) {
    margin-bottom: 8px;
}
.figure {
    display: block;
    background: #fff;
    margin-right: -100px;
}
.gate-bg {
    fill: #f6f6f6;
}
.gate {
    fill: none;
    stroke: #777;
    stroke-width: 1.300;
}
.wire {
    fill: none;
    stroke: #555;
    stroke-width: 1.500;
}
.mux {
    stroke: #000;
    stroke-width: 4;
}
.mux-lines {
    fill: none;
    stroke: #000;
    stroke-width: 5;
}
.code {
    font: 16px "Liberation Sans", sans-serif;
    fill: #222;
}
.side {
    font: 18px "Liberation Sans", sans-serif;
    fill: #222;
    text-anchor: middle;
}
.sub {
    font-size: 11px;
    baseline-shift: -4px;
}
.out {
    font: 29px "Open Sans", sans-serif;
    fill: #222;
}
.out-sub {
    font: 20px "Open Sans", sans-serif;
    fill: #222;
}
.msb {
    font: 16px "Open Sans", sans-serif;
    fill: #333;
}
.ctrl {
    font: 25.500px "Open Sans", sans-serif;
    fill: #222;
}
.squiggle {
    fill: none;
    stroke: #e0303a;
    stroke-width: 1;
}
.answer {
    margin-top: 25px;
    display: flex;
    align-items: center;
    gap: 4px;
}
.answer input {
    width: 542px;
    height: 40px;
    border: 1px solid #8f959e;
    border-radius: 6px;
    background: #fff;
}

/* things floating over the page */
.drawer-left {
    position: absolute;
    left: 0;
    top: 78px;
    width: 46px;
    height: 62px;
    padding: 0 0 0 12px;
    display: flex;
    align-items: center;
    border: 0;
    border-radius: 0 31px 31px 0;
    background: #dee2e6;
    box-shadow: 0 2px 4px rgba(0, 0, 0, 0.1);
}
.tooltip {
    position: absolute;
    left: 1632px;
    top: 96px;
    width: 138px;
    height: 29px;
    border-radius: 6px;
    background: #1a1a1a;
    color: #eee;
    font-size: 14.400px;
    line-height: 29px;
    text-align: center;
}
.tooltip::after {
    content: "";
    position: absolute;
    left: 100%;
    top: 9px;
    border: 6px solid transparent;
    border-left: 7px solid #1a1a1a;
    border-right: 0;
}
.drawer-right {
    position: absolute;
    left: 1776px;
    top: 74px;
    width: 47px;
    height: 72px;
    padding: 0 0 0 18px;
    z-index: 1;
    display: flex;
    align-items: center;
    border: 3px solid #5b7fd8;
    border-radius: 36px 0 0 36px;
    background: #dee2e6;
}
.scrollbar {
    position: absolute;
    right: 0;
    top: 68px;
    bottom: 0;
    width: 13px;
    padding-left: 3px;
    background: #f8f8f8;
}
.scrollbar span {
    display: block;
    width: 8px;
    height: 622px;
    margin-top: 129px;
    border-radius: 4px;
    background: #909090;
}
.help {
    position: absolute;
    left: 1757px;
    top: 874px;
    width: 40px;
    height: 40px;
    border: 0;
    border-radius: 50%;
    background: #dee2e6;
    font: bold 16px "Liberation Sans", sans-serif;
}
```
